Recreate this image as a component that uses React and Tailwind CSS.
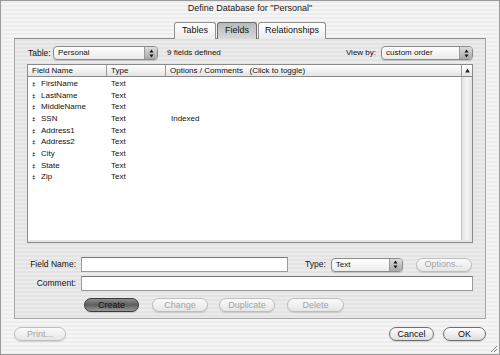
import React from "react";

const stripes =
  "bg-[repeating-linear-gradient(180deg,#ededed_0px,#ededed_2px,#f5f5f5_2px,#f5f5f5_4px)]";
const stripesDark =
  "bg-[repeating-linear-gradient(180deg,#e3e3e3_0px,#e3e3e3_2px,#ebebeb_2px,#ebebeb_4px)]";

const fields = [
  ["FirstName", "Text", ""],
  ["LastName", "Text", ""],
  ["MiddleName", "Text", ""],
  ["SSN", "Text", "Indexed"],
  ["Address1", "Text", ""],
  ["Address2", "Text", ""],
  ["City", "Text", ""],
  ["State", "Text", ""],
  ["Zip", "Text", ""],
];

const Popup = ({ label, className }) => (
  <div
    className={`flex h-[14px] items-stretch rounded-[4px] border border-[#8a8a8a] bg-gradient-to-b from-white to-[#ececec] shadow-[0_1px_1px_rgba(0,0,0,0.15)] ${className}`}
  >
    <span className="flex-1 pl-[4px] text-[8px] leading-[12px] text-[#111]">{label}</span>
    <span className="flex w-[13px] items-center justify-center rounded-r-[3px] border-l border-[#9a9a9a] bg-gradient-to-b from-[#dcdcdc] to-[#a9a9a9]">
      <svg width="5" height="9" viewBox="0 0 5 9">
        <path d="M2.5 0.5 L4.5 3.5 L0.5 3.5 Z" fill="#111" />
        <path d="M2.5 8.5 L4.5 5.5 L0.5 5.5 Z" fill="#111" />
      </svg>
    </span>
  </div>
);

const Button = ({ label, className, variant = "disabled" }) => {
  const styles = {
    disabled:
      "border-[#bdbdbd] bg-gradient-to-b from-[#fafafa] to-[#e6e6e6] text-[#a3a3a3]",
    normal:
      "border-[#6f6f6f] bg-gradient-to-b from-white to-[#dedede] text-[#111]",
    default:
      "border-[#3a3a3a] bg-gradient-to-b from-[#8c8c8c] via-[#5e5e5e] to-[#9a9a9a] text-[#111]",
  };
  return (
    <div
      className={`flex h-[14px] items-center justify-center rounded-full border text-[9px] leading-none shadow-[0_1px_1px_rgba(0,0,0,0.12)] ${styles[variant]} ${className}`}
    >
      {label}
    </div>
  );
};

const App = () => {
  return (
    <div
      className={`relative flex h-[355px] w-[500px] flex-col overflow-hidden border border-[#9a9a9a] ${stripes} font-['Liberation_Sans',Arial,sans-serif] text-[#111]`}
    >
      {/* title */}
      <div className="h-[21px] pt-[1px] text-center text-[9px] leading-[12px] text-[#222]">
        Define Database for "Personal"
      </div>

      {/* tabs */}
      <div className="relative z-10 flex h-[17px] justify-center">
        <div className="flex h-[17px] items-center rounded-t-[3px] border border-b-0 border-[#8f8f8f] bg-gradient-to-b from-white to-[#ececec] px-[7px] text-[9px]">
          Tables
        </div>
        <div className="ml-[1px] flex h-[17px] items-center rounded-t-[3px] border border-b-0 border-[#6d6d6d] bg-gradient-to-b from-[#b9b9b9] to-[#d8d8d8] px-[7px] text-[9px]">
          Fields
        </div>
        <div className="ml-[1px] flex h-[17px] items-center rounded-t-[3px] border border-b-0 border-[#8f8f8f] bg-gradient-to-b from-white to-[#ececec] px-[6px] text-[9px]">
          Relationships
        </div>
      </div>

      {/* tab panel */}
      <div
        className={`-mt-[1px] mx-[13px] flex h-[281px] flex-col border border-[#a8a8a8] border-t-[#8c8c8c] ${stripesDark} px-[12px] pt-[7px]`}
      >
        <div className="flex h-[14px] items-center">
          <span className="ml-[1px] w-[25px] text-[8.5px]">Table:</span>
          <Popup label="Personal" className="w-[105px]" />
          <span className="ml-[9px] text-[8px]">9 fields defined</span>
          <span className="ml-auto mr-[5px] text-[8px]">View by:</span>
          <Popup label="custom order" className="w-[92px]" />
        </div>

        {/* list */}
        <div className="mt-[4px] flex h-[179px] flex-col border border-[#8a8a8a] bg-white">
          <div className="flex h-[12px] border-b border-[#8a8a8a] bg-gradient-to-b from-white to-[#e4e4e4] text-[8px] leading-[11px]">
            <div className="w-[79px] border-r border-[#9a9a9a] pl-[4px]">Field Name</div>
            <div className="w-[59px] border-r border-[#9a9a9a] pl-[4px]">Type</div>
            <div className="flex-1 whitespace-pre pl-[4px]">Options / Comments   (Click to toggle)</div>
            <div className="flex w-[11px] items-center justify-center border-l border-[#9a9a9a]">
              <svg width="5" height="5" viewBox="0 0 5 5">
                <path d="M2.5 0.5 L4.8 4.5 L0.2 4.5 Z" fill="#222" />
              </svg>
            </div>
          </div>
          <div className="flex flex-1">
            <div className="flex-1 pt-[1px]">
              {fields.map(([name, type, opt]) => (
                <div key={name} className="flex h-[11.7px] items-center text-[8px]">
                  <span className="w-[13px] pl-[4px] text-[6px] font-bold leading-none">‡</span>
                  <span className="w-[66px]">{name}</span>
                  <span className="w-[60px] pl-[4px]">{type}</span>
                  <span className="pl-[4px]">{opt}</span>
                </div>
              ))}
            </div>
            <div className="w-[11px] border-l border-[#c4c4c4] bg-gradient-to-r from-[#e2e2e2] via-[#f6f6f6] to-[#e2e2e2]" />
          </div>
          <div className="h-[2px] bg-[#e6e6e6]" />
        </div>

        {/* field name row */}
        <div className="mt-[14px] flex h-[15px] items-center">
          <span className="w-[49px] text-right text-[8.5px]">Field Name:</span>
          <div className="ml-[5px] h-[15px] w-[207px] border border-[#9a9a9a] border-t-[#7a7a7a] bg-white" />
          <span className="ml-[17px] text-[8.5px]">Type:</span>
          <Popup label="Text" className="ml-[5px] w-[72px]" />
          <Button label="Options..." className="ml-[13px] w-[56px]" />
        </div>

        {/* comment row */}
        <div className="mt-[4px] flex h-[15px] items-center">
          <span className="w-[49px] text-right text-[8.5px]">Comment:</span>
          <div className="ml-[5px] h-[15px] w-[393px] border border-[#9a9a9a] border-t-[#7a7a7a] bg-white" />
        </div>

        {/* buttons */}
        <div className="mt-[7px] flex h-[14px] items-center">
          <Button label="Create" variant="default" className="ml-[57px] w-[55px]" />
          <Button label="Change" className="ml-[13px] w-[56px]" />
          <Button label="Duplicate" className="ml-[11px] w-[56px]" />
          <Button label="Delete" className="ml-[12px] w-[57px]" />
        </div>
      </div>

      {/* bottom buttons */}
      <div className="mt-[8px] flex h-[14px] items-center px-[13px]">
        <Button label="Print..." className="w-[52px]" />
        <Button label="Cancel" variant="normal" className="ml-auto w-[45px]" />
        <Button label="OK" variant="normal" className="ml-[9px] w-[43px]" />
      </div>

      {/* resize grip */}
      <svg className="absolute bottom-[1px] right-[1px]" width="9" height="9" viewBox="0 0 9 9">
        <path d="M8 2 L2 8 M8 5 L5 8" stroke="#8a8a8a" strokeWidth="1" />
      </svg>
    </div>
  );
};

export default App;
